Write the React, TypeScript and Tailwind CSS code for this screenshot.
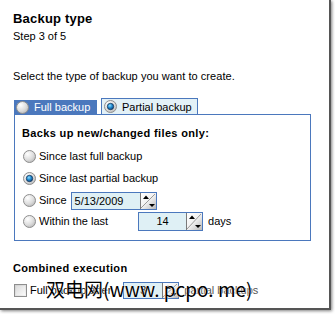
import React, { useId } from 'react';

const Radio: React.FC<{ checked?: boolean }> = ({ checked }) => {
  const id = useId().replace(/:/g, '');
  return (
    <svg width="13" height="13" viewBox="0 0 13 13" className="shrink-0">
      <defs>
        <radialGradient id={`r${id}`} cx="0.35" cy="0.3" r="0.8">
          <stop offset="0" stopColor="#ffffff" />
          <stop offset="0.6" stopColor="#dcdcdc" />
          <stop offset="1" stopColor="#b4b4b4" />
        </radialGradient>
        <radialGradient id={`d${id}`} cx="0.4" cy="0.35" r="0.7">
          <stop offset="0" stopColor="#8fdcff" />
          <stop offset="0.5" stopColor="#1f8ad0" />
          <stop offset="1" stopColor="#0a3f78" />
        </radialGradient>
      </defs>
      <circle cx="6.5" cy="6.5" r="6" fill={`url(#r${id})`} stroke="#8e8e8e" />
      {checked && <circle cx="6.5" cy="6.5" r="3.2" fill={`url(#d${id})`} stroke="#17365a" strokeWidth="0.8" />}
    </svg>
  );
};

const Spinner: React.FC<{ h: number }> = ({ h }) => {
  const id = useId().replace(/:/g, '');
  return (
    <svg width="16" height={h} viewBox={`0 0 16 ${h}`} className="shrink-0 block">
      <defs>
        <linearGradient id={`s${id}`} x1="0" y1="0" x2="1" y2="1">
          <stop offset="0" stopColor="#ffffff" />
          <stop offset="0.5" stopColor="#f2f2f2" />
          <stop offset="1" stopColor="#b8b8b8" />
        </linearGradient>
      </defs>
      <rect x="0" y="0" width="16" height={h} fill={`url(#s${id})`} />
      <line x1="0.5" y1="0" x2="0.5" y2={h} stroke="#7a7a7a" />
      <line x1="1" y1={h - 1} x2="15" y2="1" stroke="#9a9a9a" />
      <polygon points="3,6 6,2.5 9,6" fill="#000" />
      <polygon points={`9,${h - 5} 15,${h - 5} 12,${h - 2}`} fill="#000" />
    </svg>
  );
};

const Checkbox: React.FC = () => (
  <div className="w-[13px] h-[13px] border border-[#8e8e8e] bg-gradient-to-br from-[#cfcfcf] to-[#f4f4f4] p-[1px] shrink-0">
    <div className="w-full h-full bg-gradient-to-br from-[#dcdcdc] to-[#fafafa]" />
  </div>
);

export default function App() {
  return (
    <div className="relative w-[335px] h-[314px] bg-white font-['Liberation_Sans',Arial,sans-serif] text-[11px] text-black">
      <div className="w-[331px] h-[310px] bg-white border-r-2 border-b-2 border-[#555] shadow-[1px_1px_3px_rgba(0,0,0,0.5)] pt-[11px] pl-[13px]">
        <h1 className="text-[13px] leading-[16px] font-bold tracking-[0.2px]">Backup type</h1>
        <p className="mt-[2px] leading-[14px]">Step 3 of 5</p>
        <p className="mt-[26px] leading-[14px] tracking-[0.05px]">Select the type of backup you want to create.</p>

        {/* tabs */}
        <div className="mt-[15px] ml-[1px] flex items-end h-[16px]">
          <div className="w-[83px] h-[14px] bg-[#4b78bd] flex items-center pl-[2px] gap-[5px] text-white">
            <Radio />
            <span className="leading-[14px]">Full backup</span>
          </div>
          <div className="ml-[4px] w-[97px] h-[16px] bg-[#e3f1f7] border border-b-0 border-[#4b78bd] flex items-center pl-[2px] gap-[5px] relative z-10">
            <Radio checked />
            <span className="leading-[14px]">Partial backup</span>
          </div>
        </div>

        {/* panel */}
        <div className="ml-[1px] w-[297px] h-[127px] border border-[#4b78bd] pl-[8px] pt-[11px]">
          <p className="font-bold leading-[14px] -ml-[1px] tracking-[0.35px]">Backs up new/changed files only:</p>
          <div className="mt-[6px] h-[20px] flex items-center gap-[3px]">
            <Radio />
            <span>Since last full backup</span>
          </div>
          <div className="mt-[2px] h-[20px] flex items-center gap-[3px]">
            <Radio checked />
            <span>Since last partial backup</span>
          </div>
          <div className="mt-[2px] h-[21px] flex items-center gap-[3px]">
            <Radio />
            <span>Since</span>
            <div className="ml-[1px] w-[86px] h-[18px] border border-[#4b78bd] bg-[#dff0f5] flex items-center">
              <span className="flex-1 pl-[3px] leading-[16px]">5/13/2009</span>
              <Spinner h={16} />
            </div>
          </div>
          <div className="h-[21px] flex items-center gap-[3px]">
            <Radio />
            <span>Within the last</span>
            <div className="ml-[27px] w-[65px] h-[19px] border border-[#4b78bd] bg-[#dff0f5] flex items-center">
              <span className="flex-1 text-center leading-[17px]">14</span>
              <Spinner h={17} />
            </div>
            <span className="ml-[2px]">days</span>
          </div>
        </div>

        <p className="mt-[20px] font-bold leading-[14px] tracking-[0.35px]">Combined execution</p>
        <div className="mt-[7px] ml-[1px] h-[17px] flex items-center">
          <Checkbox />
          <span className="ml-[3px]">Full backup after</span>
          <div className="ml-[12px] w-[56px] h-[17px] border border-[#4b78bd] bg-[#dff0f5] flex items-center">
            <span className="flex-1 text-center leading-[15px]">3</span>
            <Spinner h={15} />
          </div>
          <span className="ml-[5px] text-[#555]">partial backups</span>
        </div>
      </div>

      {/* watermark */}
      <div className="absolute left-[46px] top-[278px] text-[19px] leading-[22px] text-black font-['Noto_Sans_CJK_SC','Liberation_Sans',sans-serif] [text-shadow:0_0_2px_#fff,0_0_1px_#fff] whitespace-nowrap">
        双电网(www. pcpo. me)
      </div>
    </div>
  );
}
